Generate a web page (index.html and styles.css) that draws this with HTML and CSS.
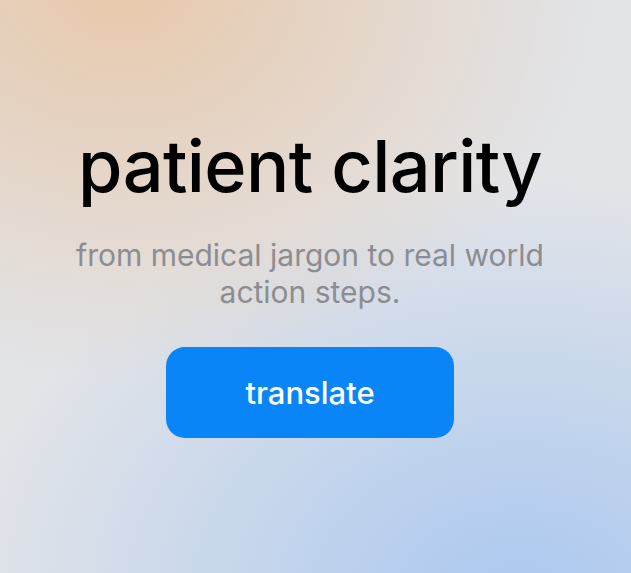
FILE: index.html
```html
<!DOCTYPE html>
<html>
<head>
<meta charset="utf-8">
<link rel="stylesheet" href="styles.css">
</head>
<body>
<main class="hero">
  <h1 class="title">patient clarity</h1>
  <p class="subtitle">from medical jargon to real world<br>action steps.</p>
  <button class="cta">translate</button>
</main>
</body>
</html>
```
FILE: styles.css
```css
html, body {
  margin: 0;
  padding: 0;
  width: 631px;
  height: 573px;
  overflow: hidden;
}
body {
  font-family: Inter, "Noto Sans", sans-serif;
  background-color: #e2e4e8;
  background-image:
    radial-gradient(ellipse 480px 400px at 120px -20px, rgba(232, 200, 170, 1), rgba(232, 200, 170, 0.55) 45%, rgba(232, 200, 170, 0) 100%),
    radial-gradient(ellipse 560px 420px at 520px 600px, rgba(170, 200, 240, 1), rgba(170, 200, 240, 0.55) 45%, rgba(170, 200, 240, 0) 100%);
}
.hero {
  display: flex;
  flex-direction: column;
  align-items: center;
  padding-top: 128px;
  padding-right: 11px;
}
.title {
  margin: 0;
  font-size: 72px;
  font-weight: 500;
  letter-spacing: -0.6px;
  line-height: 76px;
  color: #000;
}
.subtitle {
  margin: 33px 0 0;
  font-size: 30px;
  line-height: 37px;
  font-weight: 400;
  color: #8c8d92;
  text-align: center;
}
.cta {
  margin-top: 36px;
  width: 288px;
  height: 91px;
  border: none;
  border-radius: 19px;
  background: #0a85f7;
  color: #fff;
  font-family: Inter, "Noto Sans", sans-serif;
  font-size: 31px;
  font-weight: 500;
  padding: 0;
}
```
